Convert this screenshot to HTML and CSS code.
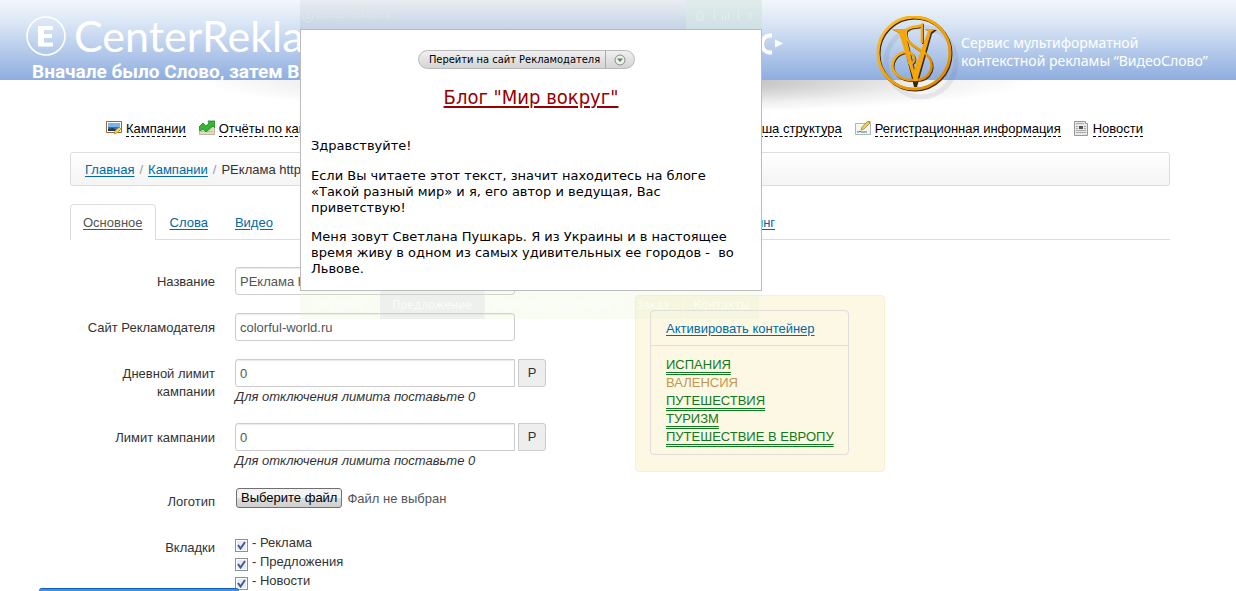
FILE: index.html
```html
<!DOCTYPE html>
<html lang="ru">
<head>
<meta charset="utf-8">
<title>CenterReklama</title>
<link rel="stylesheet" href="styles.css">
</head>
<body>
<header class="top">
  <div class="brand">
    <div class="logo">
      <svg class="logo-mark" width="40" height="40" viewBox="0 0 40 40"><circle cx="20" cy="20" r="19" fill="none" stroke="#fff" stroke-width="1.600"/><path d="M12 10h15v4H18v4h8v4h-8v4.500h9v4H12z" fill="#fff"/></svg>
      <span class="logo-name">CenterRekla</span>
    </div>
    <p class="motto">Вначале было Слово, затем В</p>
  </div>
  <svg class="sound" width="26" height="24" viewBox="0 0 26 24"><path d="M12 3.500h-2a8 8.500 0 0 0 0 17h2" fill="none" stroke="#fff" stroke-width="4"/><path d="M15 7.500l8 4-8 4z" fill="#fff"/></svg>
  <div class="service">
    <svg class="vs" width="90" height="90" viewBox="0 0 90 90">
      <defs><linearGradient id="gold" x1="0" y1="0" x2="1" y2="1"><stop offset="0" stop-color="#ffbf2e"/><stop offset=".5" stop-color="#f5a300"/><stop offset="1" stop-color="#d98600"/></linearGradient></defs>
      <circle cx="46" cy="46" r="35" fill="none" stroke="#4b5a78" stroke-opacity=".1" stroke-width="5"/>
      <g fill="none" stroke="#3d2600" transform="translate(1 1)">
        <circle cx="39" cy="37" r="36" stroke-width="3"/>
        <path d="M47 27V9C44 12 34 9 31 15C28 26 43 32 51 38C62 48 56 64 40 64C25 65 15 56 18 46C22 35 34 34 38 39C42 46 35 50 33 46" stroke-width="2"/>
      </g>
      <path d="M18 14h16l-3 3 9 37 15-38-4-2h11l-5 4-15 53h-3L26 18z" fill="#3d2600"/>
      <g fill="none" stroke="url(#gold)">
        <circle cx="39" cy="37" r="36" stroke-width="3"/>
        <path d="M47 27V9C44 12 34 9 31 15C28 26 43 32 51 38C62 48 56 64 40 64C25 65 15 56 18 46C22 35 34 34 38 39C42 46 35 50 33 46" stroke-width="2.500"/>
      </g>
      <path d="M16 13h17l-3 2 9 39 14-39-4-2h12l-5 3-14 49h-3L24 17z" fill="#f5a60a"/>
    </svg>
    <p>Сервис мультиформатной<br>контекстной рекламы “ВидеоСлово”</p>
  </div>
</header>

<main class="page">
  <nav class="menu">
    <div class="menu-group">
      <a href="#"><svg width="16" height="14" viewBox="0 0 16 14"><path d="M.5.500h15v11H.5z" fill="#fff" stroke="#9a6435"/><path d="M2 2h12v4H2z" fill="#75b6ee"/><path d="M2 6h12v4H2z" fill="#3f6f9f"/><path d="M2 8l5-1 4 3H2z" fill="#27394a"/><path d="M8 13l1-3 4-4 2 2-4 4z" fill="#f5d34b" stroke="#9b7b1a" stroke-width=".6"/></svg><span>Кампании</span></a>
      <a class="reports" href="#"><svg width="16" height="16" viewBox="0 0 16 16"><path d="M.5 6.500h15v8H.5z" fill="#e2dbc8" stroke="#c0b69c"/><path d="M2 11.500h12" stroke="#c5bca2"/><path d="M0 9V7l4-4 3 3 3-3-1-2h7v7l-2-2-7 6-3-3-3 2z" fill="#35b534" stroke="#188a20" stroke-width=".8"/></svg><span>Отчёты по кам</span></a>
    </div>
    <div class="menu-group">
      <a href="#"><span>Наша структура</span></a>
      <a href="#"><svg width="16" height="14" viewBox="0 0 16 14"><path d="M.5 2.500h15v11H.5z" fill="#f3f8f7" stroke="#a9b9b9"/><path d="M2 11h2l1-1 1 1h6" fill="none" stroke="#4c7777"/><path d="M6 9l1-3 6-6 2 2-6 6z" fill="#f3ce4d" stroke="#94803d" stroke-width=".7"/><path d="M13 0l2 2 1-1-2-1z" fill="#d24a3a"/></svg><span>Регистрационная информация</span></a>
      <a href="#"><svg width="15" height="15" viewBox="0 0 15 15"><path d="M.5.500h11v2h2v12H.5z" fill="#e8e8e8" stroke="#989898"/><path d="M2 2.500h8M2 5.500h2M2 7.500h2M2 9.500h10M2 11.500h10M10 5.500h2M10 7.500h2" stroke="#aaa"/><path d="M5 5h4v3H5z" fill="#555"/></svg><span>Новости</span></a>
    </div>
  </nav>

  <div class="crumbs"><a href="#">Главная</a><i>/</i><a href="#">Кампании</a><i>/</i><span>РЕклама http</span></div>

  <ul class="tabs">
    <li class="active"><a href="#">Основное</a></li>
    <li><a href="#">Слова</a></li>
    <li><a href="#">Видео</a></li>
    <li class="tab-far"><a href="#">Маркетинг</a></li>
  </ul>

  <div class="columns">
    <form class="form">
      <div class="row"><label for="name">Название</label><div class="field"><input type="text" id="name" value="РЕклама http"></div></div>
      <div class="row"><label for="site">Сайт Рекламодателя</label><div class="field"><input type="text" id="site" value="colorful-world.ru"></div></div>
      <div class="row"><label for="day">Дневной лимит кампании</label><div class="field"><div class="append"><input type="text" id="day" value="0"><span>Р</span></div><em>Для отключения лимита поставьте 0</em></div></div>
      <div class="row"><label for="limit">Лимит кампании</label><div class="field"><div class="append"><input type="text" id="limit" value="0"><span>Р</span></div><em>Для отключения лимита поставьте 0</em></div></div>
      <div class="row"><label for="file">Логотип</label><div class="field file"><button type="button" id="file">Выберите файл</button><span>Файл не выбран</span></div></div>
      <div class="row"><span class="caption">Вкладки</span><div class="field checks">
        <label><input type="checkbox" checked> - Реклама</label>
        <label><input type="checkbox" checked> - Предложения</label>
        <label><input type="checkbox" checked> - Новости</label>
      </div></div>
    </form>
    <aside class="note">
      <div class="box">
        <div class="box-head"><a href="#">Активировать контейнер</a></div>
        <ul>
          <li><a href="#">ИСПАНИЯ</a></li>
          <li class="off">ВАЛЕНСИЯ</li>
          <li><a href="#">ПУТЕШЕСТВИЯ</a></li>
          <li><a href="#">ТУРИЗМ</a></li>
          <li><a href="#">ПУТЕШЕСТВИЕ В ЕВРОПУ</a></li>
        </ul>
      </div>
    </aside>
  </div>
</main>

<section class="popup">
  <div class="popup-bar">
    <div class="popup-brand"><svg width="12" height="16" viewBox="0 0 12 16"><ellipse cx="6" cy="8" rx="5" ry="7" fill="none" stroke="currentColor"/><path d="M8 5H4.500v6H8M4.500 8H8" fill="none" stroke="currentColor" stroke-width="1.500"/></svg><span>CenterReklama</span></div>
    <div class="popup-tools">
      <svg width="64" height="12" viewBox="0 0 64 12" fill="none" stroke="currentColor"><path d="M3 6l5-4 5 4M5 6v5h6V6M22.500 1v10" /><path d="M30.500 8v3M33.500 5v6M36.500 2v9M46.500 1v10M55 3l5 7M60 3l-5 7"/></svg>
    </div>
  </div>
  <div class="popup-body">
    <div class="go"><button type="button">Перейти на сайт Рекламодателя</button><button type="button" aria-label="Ещё"><svg width="12" height="12" viewBox="0 0 12 12"><circle cx="6" cy="6" r="5" fill="#eee" stroke="#888"/><path d="M3 4.500h6L6 8z" fill="#489048"/></svg></button></div>
    <h1><a href="#">Блог "Мир вокруг"</a></h1>
    <p>Здравствуйте!</p>
    <p>Если Вы читаете этот текст, значит находитесь на блоге<br>«Такой разный мир» и я, его автор и ведущая, Вас<br>приветствую!</p>
    <p>Меня зовут Светлана Пушкарь. Я из Украины и в настоящее<br>время живу в одном из самых удивительных ее городов -&nbsp; во<br>Львове.</p>
  </div>
  <div class="popup-tabs"><span>Реклама</span><span class="current">Предложение</span><span>Новости</span><span>Подписка</span><span>Заказ</span><span>Контакты</span></div>
</section>
<div class="status"></div>
</body>
</html>
```
FILE: styles.css
```css
* { box-sizing: border-box; }
html { height: 100%; overflow: hidden; }
body { margin: 0; height: 100%; overflow: hidden; position: relative; background: #fff; color: #333; font: 13px/18px "Liberation Sans", Arial, sans-serif; }
p, h1, ul { margin: 0; padding: 0; }
ul { list-style: none; }
a { color: #0069a6; text-underline-offset: 2px; }
svg { display: block; flex: none; }
button, input { font: inherit; }

.top { position: relative; display: flex; height: 80px; background: linear-gradient(#f2f7fb 0, #d9e5f5 30%, #8eaddf 100%); color: #fff; }
.top::after { content: ""; position: absolute; left: 16%; right: 16%; top: 80px; height: 34px; background: radial-gradient(50% 100% at 50% 0, rgba(0,0,0,.34), rgba(0,0,0,.18) 45%, rgba(0,0,0,.06) 75%, transparent); }
.brand { width: 760px; height: 80px; padding: 16px 0 0 26px; }
.logo { display: flex; gap: 8px; height: 42px; }
.logo-name { font: 43px/40px Lato, sans-serif; }
.motto { padding-left: 6px; font: bold 19px/28px Roboto, sans-serif; white-space: nowrap; }
.sound { margin-top: 32px; }
.service { display: flex; margin-left: 89px; padding-top: 16px; position: relative; z-index: 1; }
.service p { padding-top: 18px; margin-left: -4px; font: 14px/18px "Noto Sans", sans-serif; white-space: nowrap; }

.page { padding: 0 66px 0 70px; }
.menu { display: flex; justify-content: space-between; padding: 40px 27px 15px 36px; }
.menu-group { display: flex; gap: 13px; }
.menu a { display: flex; gap: 4px; color: #000; text-decoration: none; white-space: nowrap; }
.menu a svg { margin-top: 1px; }
.menu a.reports svg { margin-top: 0; }
.menu a span { height: 17px; border-bottom: 1px dashed #000; }
.crumbs { padding: 8px 14px 6px; border: 1px solid #ddd; border-radius: 3px; background: linear-gradient(#fff, #f4f4f4); }
.crumbs i { margin: 0 5px; color: #999; font-style: normal; }
.tabs { display: flex; gap: 1px; margin: 18px 0 27px; border-bottom: 1px solid #ddd; }
.tabs a { display: block; height: 35px; padding: 9px 12px; border: 1px solid transparent; border-bottom: 0; }
.tabs .active { margin-bottom: -1px; background: #fff; }
.tabs .active a { height: 36px; border-color: #ddd; border-radius: 4px 4px 0 0; color: #555; }
.tab-far { margin-left: 412px; }

.columns { display: flex; gap: 86px; align-items: flex-start; }
.form { width: 479px; }
.row { display: flex; gap: 20px; margin-bottom: 18px; }
.row > label, .caption { width: 145px; padding-top: 6px; text-align: right; }
.field { flex: 1; }
.field input[type=text] { display: block; width: 280px; height: 28px; padding: 4px; border: 1px solid #ccc; border-radius: 3px; background: #fff; color: #555; box-shadow: inset 0 1px 1px rgba(0,0,0,.08); }
.append { display: flex; gap: 3px; }
.append input[type=text] { border-radius: 3px 0 0 3px; }
.append span { width: 28px; height: 28px; padding-top: 4px; border: 1px solid #ccc; border-radius: 0 3px 3px 0; background: #eee; text-align: center; }
.field em { display: block; height: 18px; line-height: 20px; white-space: nowrap; }
.file { display: flex; gap: 5px; height: 28px; padding: 1px; color: #555; }
.file button { height: 20px; padding: 0 4px; border: 1px solid #707070; border-radius: 3px; background: linear-gradient(#f3f3f3 50%, #ddd 50%, #cfcfcf); color: #000; line-height: 18px; white-space: nowrap; }
.file span { line-height: 22px; }
.checks label { display: flex; gap: 4px; height: 19px; line-height: 20px; }
.checks input { appearance: none; width: 13px; height: 13px; margin: 6px 0 0; border: 1px solid #8e8f8f; background: #e8ebf2 url("data:image/svg+xml,%3Csvg xmlns='http://www.w3.org/2000/svg' viewBox='0 0 11 11'%3E%3Cpath d='M2 5l2.500 3.500L9 2' fill='none' stroke='%23405a9c' stroke-width='2'/%3E%3C/svg%3E"); box-shadow: inset 0 0 0 1px #fff; }

.note { width: 250px; margin-top: 28px; padding: 14px 14px 16px; border: 1px solid #fbeed5; border-radius: 4px; background: #fcf8e3; }
.box { width: 199px; border: 1px solid #ddd; border-radius: 4px; white-space: nowrap; }
.box-head { padding: 9px 15px 7px; border-bottom: 1px solid #ddd; }
.box ul { padding: 10px 15px 8px; }
.box li { color: #c09853; }
.box li a { color: #107a20; text-decoration: underline double; text-underline-offset: 3px; text-decoration-skip-ink: none; }

.popup { position: absolute; z-index: 2; left: 300px; top: 0; width: 462px; }
.popup-bar { display: flex; justify-content: space-between; height: 29px; background: linear-gradient(#e8edf0, #c6d4e7); color: #dbe8eb; font: 11px/30px "DejaVu Sans Condensed", sans-serif; }
.popup-brand { display: flex; align-items: center; gap: 1px; padding-left: 2px; }
.popup-tools { display: flex; align-items: center; justify-content: center; width: 76px; background: rgba(216,236,228,.5); color: #e2eef2; }
.popup-body { height: 262px; padding: 20px 10px 0; border: 1px solid #bbb; background: #fff; color: #000; font: 13px/16px Verdana, "DejaVu Sans", sans-serif; white-space: nowrap; }
.popup-body p { margin-bottom: 14px; }
.popup-body p:nth-of-type(2) { margin-bottom: 13px; }
.go { display: flex; height: 19px; margin-left: 107px; width: 217px; border: 1px solid #b9b9b9; border-radius: 10px; background: linear-gradient(#f0f0f0, #d4d4d4); }
.go button { display: flex; align-items: center; justify-content: center; border: 0; padding: 0; background: none; color: #000; font: 11px/17px Tahoma, "DejaVu Sans Condensed", sans-serif; }
.go button:first-child { flex: 1; padding-left: 5px; border-right: 1px solid #aaa; }
.go button:last-child { width: 28px; }
.popup-body h1 { margin: 16px 0 29px; font: 20px/24px Tahoma, "DejaVu Sans Condensed", sans-serif; text-align: center; }
.popup-body h1 a { color: #900; }
.popup-tabs { display: grid; grid-template-columns: 80fr 105fr 65fr 72fr 62fr 76fr; height: 28px; width: 460px; background: rgba(225,240,200,.22); color: rgba(255,255,255,.75); font: 12px/28px "DejaVu Sans Condensed", sans-serif; }
.popup-tabs span { text-align: center; border-right: 1px solid rgba(255,255,255,.3); }
.popup-tabs .current { background: rgba(200,200,215,.22); }
.status { position: absolute; z-index: 1; left: 39px; bottom: 0; width: 200px; height: 3px; border-top: 1px solid #1560b5; border-radius: 4px 4px 0 0; background: #3f91e8; }
```
